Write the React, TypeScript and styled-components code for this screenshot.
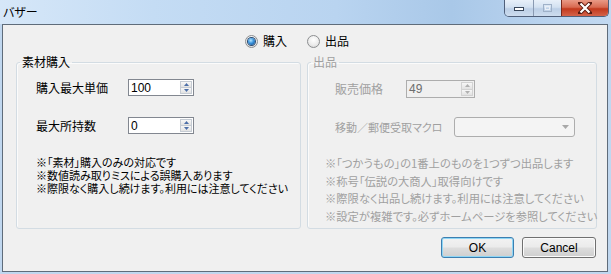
import React from 'react'
import styled, { createGlobalStyle } from 'styled-components'

const GlobalStyle = createGlobalStyle`
  html, body { margin: 0; padding: 0; }
  body {
    width: 611px;
    height: 274px;
    overflow: hidden;
    font-family: "Noto Sans CJK JP", "Liberation Sans", sans-serif;
    font-size: 12px;
    font-feature-settings: "palt";
    color: #000;
  }
`

const GRAY = '#a0a0a0'

const Window = styled.div`
  width: 611px;
  height: 274px;
  display: flex;
  flex-direction: column;
  background: #c0d7ef;
`

const TitleBar = styled.div`
  height: 24px;
  flex: none;
  display: flex;
  justify-content: space-between;
  align-items: flex-start;
  padding-left: 3px;
  background: linear-gradient(90deg, #d6e7f8 0%, #c4dcf4 25%, #b9d4f0 55%, #a9c8e8 74%, #b8d2ee 88%, #c2d9f1 100%);
`

const Title = styled.span`
  margin-top: 5px;
  font-size: 12px;
  line-height: 13px;
`

const Caption = styled.div`
  display: flex;
  height: 16px;
  margin-right: 2px;
  border: 1px solid #50607a;
  border-top: none;
  border-radius: 0 0 5px 5px;
  overflow: hidden;
`

const CapButton = styled.div<{ $w: number; $close?: boolean }>`
  width: ${p => p.$w}px;
  display: flex;
  align-items: center;
  justify-content: center;
  border-left: 1px solid ${p => (p.$close ? '#7a2a1c' : '#8a9ab2')};
  background: ${p =>
    p.$close
      ? 'linear-gradient(#e99a86 0%, #d86a51 45%, #c2391d 55%, #d4634a 100%)'
      : 'linear-gradient(#e8f0f9 0%, #d3e1f1 45%, #bccfe6 55%, #cddcee 100%)'};
  &:first-child { border-left: none; }
`

const Client = styled.div`
  flex: 1;
  margin: 0 3px 2px 2px;
  border: 1px solid #5f6c7a;
  background: #f0f0f0;
  display: flex;
  flex-direction: column;
`

const RadioRow = styled.div`
  display: flex;
  align-items: center;
  gap: 20px;
  height: 16px;
  margin-top: 8px;
  padding-left: 242px;
`

const Radio = styled.label`
  display: flex;
  align-items: center;
  gap: 5px;
  line-height: 16px;
`

const RadioDot = styled.span<{ $on?: boolean }>`
  box-sizing: border-box;
  width: 13px;
  height: 13px;
  border-radius: 50%;
  border: 1px solid #8c8e90;
  background: radial-gradient(circle at 50% 35%, #ffffff 0%, #ececec 55%, #d2d2d2 100%);
  display: flex;
  align-items: center;
  justify-content: center;
  &::after {
    content: '';
    display: ${p => (p.$on ? 'block' : 'none')};
    width: 7px;
    height: 7px;
    border-radius: 50%;
    box-shadow: 0 0 0 1px #2a4a70;
    background: radial-gradient(circle at 40% 35%, #b6e6ff 0%, #3a93dc 45%, #0c3f7d 100%);
  }
`

const Groups = styled.div`
  display: flex;
  gap: 6px;
  margin-top: 7px;
  padding-left: 13px;
`

const Group = styled.fieldset<{ $w: number }>`
  box-sizing: border-box;
  width: ${p => p.$w}px;
  height: 173px;
  min-width: 0;
  margin: 0;
  padding: 0;
  border: 1px solid #d3dce3;
  border-radius: 3px;
  box-shadow: inset 1px 1px 0 #fbfbfb;
`

const Legend = styled.legend<{ $off?: boolean }>`
  margin-left: 3px;
  padding: 0 2px;
  font-size: 12px;
  line-height: 12px;
  color: ${p => (p.$off ? GRAY : '#000')};
`

const Body = styled.div<{ $pad: number }>`
  display: flex;
  flex-direction: column;
  padding-left: ${p => p.$pad}px;
`

const Row = styled.div<{ $top: number }>`
  display: flex;
  align-items: center;
  margin-top: ${p => p.$top}px;
`

const Label = styled.span<{ $w: number; $size?: number; $off?: boolean }>`
  width: ${p => p.$w}px;
  flex: none;
  white-space: nowrap;
  font-size: ${p => p.$size ?? 12}px;
  line-height: 14px;
  color: ${p => (p.$off ? GRAY : '#000')};
`

const Spin = styled.div<{ $w: number; $h: number; $off?: boolean }>`
  box-sizing: border-box;
  display: flex;
  width: ${p => p.$w}px;
  height: ${p => p.$h}px;
  border: 1px solid ${p => (p.$off ? '#adadad' : '#828790')};
  background: ${p => (p.$off ? '#f0f0f0' : '#ffffff')};
`

const SpinValue = styled.span<{ $off?: boolean }>`
  flex: 1;
  display: flex;
  align-items: center;
  padding-left: 2px;
  font-family: "Liberation Sans", sans-serif;
  font-size: 12px;
  color: ${p => (p.$off ? '#6d6d6d' : '#000')};
`

const SpinButtons = styled.div`
  display: flex;
  flex-direction: column;
  width: 12px;
  margin: 1px;
`

const SpinHalf = styled.div<{ $off?: boolean }>`
  flex: 1;
  display: flex;
  align-items: center;
  justify-content: center;
  border: 1px solid ${p => (p.$off ? '#d2d2d2' : '#c5cbd3')};
  background: linear-gradient(#f7f7f7, #e2e2e2);
  & + & { border-top: none; }
`

const Combo = styled.div`
  box-sizing: border-box;
  width: 121px;
  height: 20px;
  border: 1px solid #adadad;
  border-radius: 3px;
  background: #f4f4f4;
  display: flex;
  align-items: center;
  justify-content: flex-end;
  padding-right: 5px;
`

const Notes = styled.div<{ $top: number; $lh: number; $size: number; $indent?: number; $off?: boolean }>`
  margin-top: ${p => p.$top}px;
  margin-left: ${p => p.$indent ?? 0}px;
  font-size: ${p => p.$size}px;
  line-height: ${p => p.$lh}px;
  white-space: nowrap;
  color: ${p => (p.$off ? GRAY : '#000')};
`

const Buttons = styled.div`
  display: flex;
  justify-content: flex-end;
  gap: 8px;
  margin-top: 8px;
  padding-right: 11px;
`

const Button = styled.button<{ $w: number; $focus?: boolean }>`
  box-sizing: border-box;
  width: ${p => p.$w}px;
  height: 21px;
  padding: 0;
  border: 1px solid ${p => (p.$focus ? '#3c7fb1' : '#707070')};
  border-radius: 3px;
  box-shadow: inset 0 0 0 1px ${p => (p.$focus ? '#8fd6f5' : '#fbfbfb')};
  background: linear-gradient(#f2f2f2 0%, #ebebeb 48%, #dddddd 52%, #cfcfcf 100%);
  font-family: "Liberation Sans", sans-serif;
  font-size: 12px;
  color: #000;
`

const Arrow = ({ up, color }: { up?: boolean; color: string }) => (
  <svg width="5" height="3" viewBox="0 0 5 3">
    <polygon points={up ? '2.5,0 5,3 0,3' : '0,0 5,0 2.5,3'} fill={color} />
  </svg>
)

const SpinField = ({ value, w, h, off }: { value: string; w: number; h: number; off?: boolean }) => {
  const c = off ? '#b0b0b0' : '#4d6fa8'
  return (
    <Spin $w={w} $h={h} $off={off}>
      <SpinValue $off={off}>{value}</SpinValue>
      <SpinButtons>
        <SpinHalf $off={off}><Arrow up color={c} /></SpinHalf>
        <SpinHalf $off={off}><Arrow color={c} /></SpinHalf>
      </SpinButtons>
    </Spin>
  )
}

export default function App() {
  return (
    <>
      <GlobalStyle />
      <Window>
        <TitleBar>
          <Title>バザー</Title>
          <Caption>
            <CapButton $w={28}>
              <svg width="12" height="8" viewBox="0 0 12 8">
                <rect x="1.5" y="3.5" width="9" height="3" fill="#fff" stroke="#39475a" />
              </svg>
            </CapButton>
            <CapButton $w={27}>
              <svg width="11" height="10" viewBox="0 0 11 10">
                <rect x="1.5" y="1.5" width="8" height="7" fill="none" stroke="#9fb1c8" />
                <rect x="3.5" y="3.5" width="4" height="3" fill="none" stroke="#e9eff7" />
              </svg>
            </CapButton>
            <CapButton $w={46} $close>
              <svg width="14" height="12" viewBox="0 0 14 12">
                <path d="M2 1 L12 11 M12 1 L2 11" stroke="#5a1a10" strokeWidth="4" strokeLinecap="square" />
                <path d="M2.5 1.5 L11.5 10.5 M11.5 1.5 L2.5 10.5" stroke="#ffffff" strokeWidth="2.2" />
              </svg>
            </CapButton>
          </Caption>
        </TitleBar>
        <Client>
          <RadioRow>
            <Radio><RadioDot $on />購入</Radio>
            <Radio><RadioDot />出品</Radio>
          </RadioRow>
          <Groups>
            <Group $w={285}>
              <Legend>素材購入</Legend>
              <Body $pad={19}>
                <Row $top={11}>
                  <Label $w={92}>購入最大単価</Label>
                  <SpinField value="100" w={66} h={17} />
                </Row>
                <Row $top={21}>
                  <Label $w={92}>最大所持数</Label>
                  <SpinField value="0" w={66} h={17} />
                </Row>
                <Notes $top={22} $lh={13} $size={11}>
                  ※「素材」購入のみの対応です<br />
                  ※数値読み取りミスによる誤購入あります<br />
                  ※際限なく購入し続けます。利用には注意してください
                </Notes>
              </Body>
            </Group>
            <Group $w={290}>
              <Legend $off>出品</Legend>
              <Body $pad={27}>
                <Row $top={12}>
                  <Label $w={71} $off>販売価格</Label>
                  <SpinField value="49" w={69} h={18} off />
                </Row>
                <Row $top={19}>
                  <Label $w={119} $size={11} $off>移動／郵便受取マクロ</Label>
                  <Combo>
                    <svg width="7" height="4" viewBox="0 0 7 4">
                      <polygon points="0,0 7,0 3.5,4" fill="#a8a8a8" />
                    </svg>
                  </Combo>
                </Row>
                <Notes $top={18} $lh={17.5} $size={11.3} $indent={-10} $off>
                  ※「つかうもの」の1番上のものを1つずつ出品します<br />
                  ※称号「伝説の大商人」取得向けです<br />
                  ※際限なく出品し続けます。利用には注意してください<br />
                  ※設定が複雑です。必ずホームページを参照してください
                </Notes>
              </Body>
            </Group>
          </Groups>
          <Buttons>
            <Button $w={73} $focus>OK</Button>
            <Button $w={74}>Cancel</Button>
          </Buttons>
        </Client>
      </Window>
    </>
  )
}
